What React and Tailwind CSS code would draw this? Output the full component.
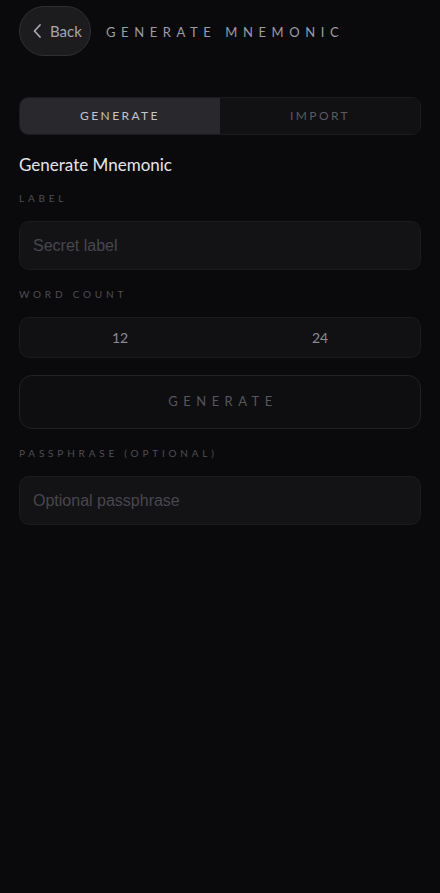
import React from "react";

const font = { fontFamily: "Lato, 'Noto Sans', sans-serif" };

const FieldLabel = ({ children }) => (
    <div className="text-[10px] tracking-[0.38em] text-[#4e4e54] uppercase leading-none">{children}</div>
);

const TextField = ({ placeholder }) => (
    <input
        placeholder={placeholder}
        className="w-full h-[49px] rounded-[10px] bg-[#131316] border border-[#1b1b1e] px-[13px] text-[16px] text-[#d0d0d4] placeholder:text-[#47474c] outline-none"
        style={{ fontFamily: "'Liberation Sans', Arial, sans-serif" }}
    />
);

export default function App() {
    return (
        <div className="min-h-[893px] w-full bg-[#0a0a0c] text-white" style={font}>
            <div className="flex items-center gap-[15px] px-[19px] pt-[6px]">
                <button className="flex items-center gap-[6px] h-[50px] w-[72px] rounded-full bg-[#1c1c1f] border border-[#2f2f33] pl-[11px] text-[#a6a6ac] text-[15px]">
                    <svg width="13" height="16" viewBox="0 0 13 16" fill="none">
                        <path d="M9 2 L3.5 8 L9 14" stroke="#a6a6ac" strokeWidth="1.8" strokeLinecap="round" strokeLinejoin="round" />
                    </svg>
                    <span>Back</span>
                </button>
                <h1 className="pt-[3px] text-[13px] tracking-[0.43em] text-[#9c9ca3] font-normal">GENERATE MNEMONIC</h1>
            </div>

            <div className="px-[19px] pt-[41px] flex flex-col">
                <div className="grid grid-cols-2 h-[38px] rounded-[9px] border border-[#1c1c1f] overflow-hidden">
                    <div className="flex items-center justify-center bg-[#28282d] text-[12px] tracking-[0.2em] text-[#c4c4ca]">GENERATE</div>
                    <div className="flex items-center justify-center bg-[#111114] text-[12px] tracking-[0.2em] text-[#5a5a60]">IMPORT</div>
                </div>

                <div className="mt-[21px] text-[17px] text-[#e4e4e8] leading-none">Generate Mnemonic</div>

                <div className="mt-[20px]"><FieldLabel>Label</FieldLabel></div>
                <div className="mt-[18px]"><TextField placeholder="Secret label" /></div>

                <div className="mt-[19px]"><FieldLabel>Word count</FieldLabel></div>
                <div className="mt-[18px] grid grid-cols-2 h-[41px] rounded-[10px] bg-[#111114] border border-[#1b1b1e] text-[14px] text-[#8a8a90]">
                    <div className="flex items-center justify-center">12</div>
                    <div className="flex items-center justify-center">24</div>
                </div>

                <button className="mt-[17px] h-[54px] rounded-[13px] bg-[#0e0e11] border border-[#222226] text-[13px] tracking-[0.42em] text-[#56565c] pl-[6px]">
                    GENERATE
                </button>

                <div className="mt-[19px]"><FieldLabel>Passphrase (optional)</FieldLabel></div>
                <div className="mt-[18px]"><TextField placeholder="Optional passphrase" /></div>
            </div>
        </div>
    );
}
